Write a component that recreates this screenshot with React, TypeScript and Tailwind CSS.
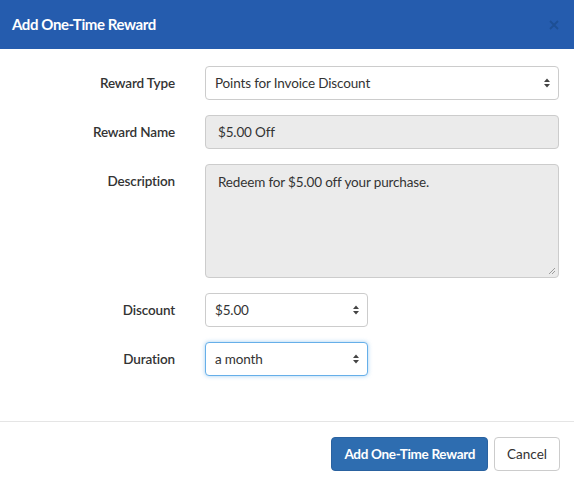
import React from "react";

function Arrows() {
  return (
    <svg width="8" height="12" viewBox="0 0 8 12" className="absolute right-[7px] top-1/2 -translate-y-1/2">
      <path d="M4 1.5 L7 5 L1 5 Z" fill="#444" />
      <path d="M4 10.5 L7 7 L1 7 Z" fill="#444" />
    </svg>
  );
}

function Select({ value, width, focused }: { value: string; width: string; focused?: boolean }) {
  return (
    <div
      className={`relative h-[34px] ${width} rounded-[4px] border bg-white flex items-center pl-[9px] text-[13.5px] tracking-[-0.15px] text-[#333] ${
        focused ? "border-[#66afe9] shadow-[0_0_4px_rgba(102,175,233,0.6)]" : "border-[#ccc]"
      }`}
    >
      {value}
      <Arrows />
    </div>
  );
}

function Row({ label, children }: { label: string; children: React.ReactNode }) {
  return (
    <div className="flex gap-[30px]">
      <div className="w-[175px] shrink-0 text-right text-[13.5px] tracking-[-0.15px] font-semibold text-[#333] leading-[20px] pt-[7px]">{label}</div>
      {children}
    </div>
  );
}

export default function App() {
  return (
    <div className="w-[574px] h-[484px] bg-white flex flex-col" style={{ fontFamily: "Lato, 'Open Sans', sans-serif" }}>
      <div className="h-[49px] bg-[#255cae] flex items-center justify-between pl-[12px] pr-[15px] shrink-0">
        <div className="text-white text-[15px] font-bold tracking-[-0.4px]">Add One-Time Reward</div>
        <svg width="10" height="10" viewBox="0 0 10 10">
          <path d="M1 1 L9 9 M9 1 L1 9" stroke="#1d4f95" strokeWidth="1.8" />
        </svg>
      </div>
      <div className="flex flex-col gap-[15px] pt-[17px] pr-[15px]">
        <Row label="Reward Type">
          <Select value="Points for Invoice Discount" width="w-[354px]" />
        </Row>
        <Row label="Reward Name">
          <div className="h-[34px] w-[354px] rounded-[4px] border border-[#ccc] bg-[#ebebeb] flex items-center pl-[12px] text-[13.5px] tracking-[-0.15px] text-[#333]">
            $5.00 Off
          </div>
        </Row>
        <Row label="Description">
          <div className="relative h-[114px] w-[354px] rounded-[4px] border border-[#ccc] bg-[#ebebeb] pl-[12px] pt-[7px] text-[13.5px] tracking-[-0.15px] text-[#333] leading-[20px]">
            Redeem for $5.00 off your purchase.
            <svg width="8" height="8" viewBox="0 0 8 8" className="absolute right-[2px] bottom-[2px]">
              <path d="M7 1 L1 7 M7 4 L4 7" stroke="#888" strokeWidth="0.8" />
            </svg>
          </div>
        </Row>
        <Row label="Discount">
          <Select value="$5.00" width="w-[163px]" />
        </Row>
        <Row label="Duration">
          <Select value="a month" width="w-[163px]" focused />
        </Row>
      </div>
      <div className="mt-auto border-t border-[#e5e5e5] h-[63px] flex items-start justify-end gap-[6px] pt-[15px] pr-[14px]">
        <div className="h-[34px] px-[12px] rounded-[4px] bg-[#2e6db0] border border-[#2a62a0] text-white text-[13.5px] tracking-[-0.3px] font-bold flex items-center">
          Add One-Time Reward
        </div>
        <div className="h-[34px] px-[12px] rounded-[4px] bg-white border border-[#ccc] text-[#333] text-[13.5px] flex items-center">
          Cancel
        </div>
      </div>
    </div>
  );
}
